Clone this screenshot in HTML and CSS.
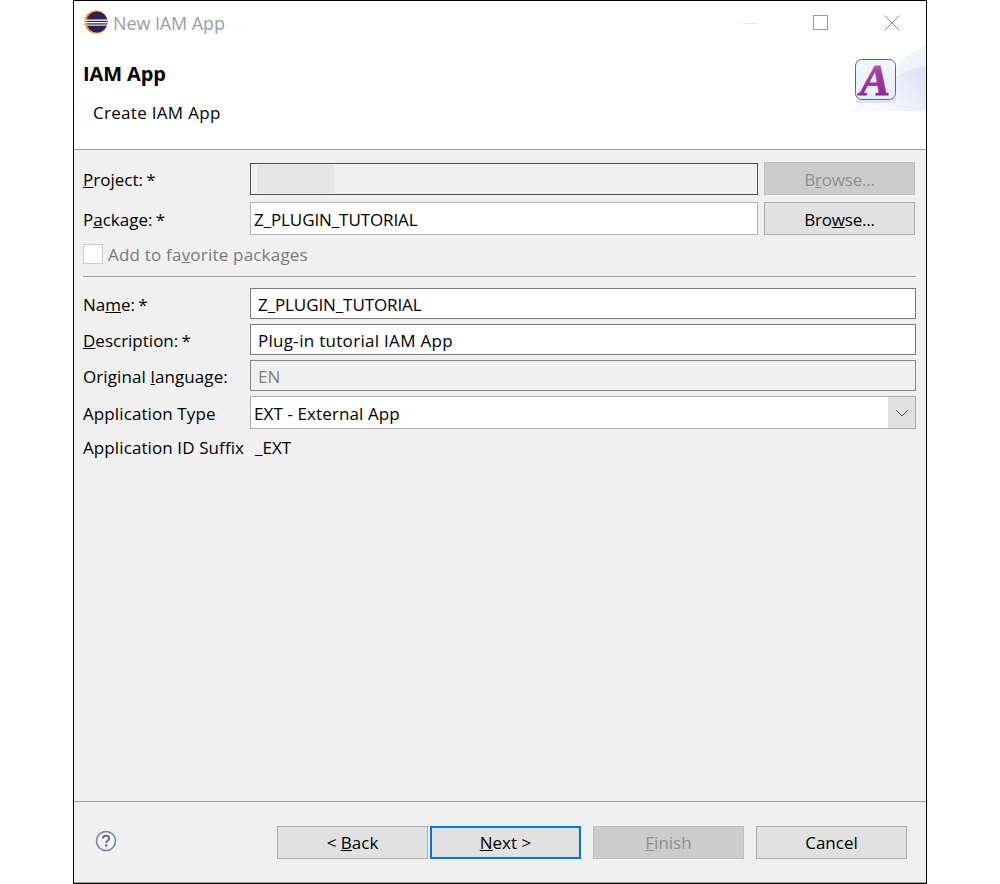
FILE: index.html
```html
<!DOCTYPE html>
<html lang="en">
<head>
<meta charset="utf-8">
<title>New IAM App</title>
<link rel="stylesheet" href="styles.css">
</head>
<body>
<div class="window">
  <div class="titlebar">
    <svg class="app-icon" width="24" height="24" viewBox="0 0 24 24">
      <circle cx="12" cy="12" r="11.5" fill="#f7941e"/>
      <circle cx="13" cy="12" r="10.5" fill="#2c2255"/>
      <rect x="1.5" y="9.5" width="22" height="1.3" fill="#fff"/>
      <rect x="1.5" y="12" width="22" height="1.3" fill="#fff"/>
      <rect x="2" y="14.5" width="21" height="1.2" fill="#e8e8f2"/>
    </svg>
    <span class="win-title">New IAM App</span>
    <div class="win-controls">
      <svg class="ctl-min" width="16" height="16" viewBox="0 0 16 16"><path d="M0 7.5H15" stroke="#e6e6e6"/></svg>
      <svg class="ctl-max" width="16" height="16" viewBox="0 0 16 16"><rect x="0.5" y="0.5" width="14" height="14" fill="none" stroke="#999"/></svg>
      <svg class="ctl-close" width="16" height="16" viewBox="0 0 16 16"><path d="M0.5 0.5L15.5 15.5M15.5 0.5L0.5 15.5" stroke="#8a8a8a"/></svg>
    </div>
  </div>
  <div class="banner">
    <div class="banner-text">
      <div class="banner-head">IAM App</div>
      <div class="banner-sub">Create IAM App</div>
    </div>
    <svg class="banner-logo" width="75" height="66" viewBox="0 0 75 66">
      <defs>
        <linearGradient id="sw" x1="0" y1="1" x2="1" y2="0.3"><stop offset="0" stop-color="#ffffff"/><stop offset="1" stop-color="#dde5f6"/></linearGradient>
        <linearGradient id="sw2" x1="0" y1="0" x2="1" y2="0"><stop offset="0" stop-color="#f6f8fd"/><stop offset="1" stop-color="#eef2fb"/></linearGradient>
        <linearGradient id="box" x1="0" y1="0" x2="0" y2="1"><stop offset="0" stop-color="#f2f6fd"/><stop offset="1" stop-color="#e6edf9"/></linearGradient>
        <linearGradient id="glyph" x1="0" y1="0" x2="0" y2="1"><stop offset="0" stop-color="#c98bc4"/><stop offset="0.35" stop-color="#a03fa0"/><stop offset="1" stop-color="#8a1f90"/></linearGradient>
      </defs>
      <path d="M0 66C22 52 48 10 75 0V66Z" fill="url(#sw2)"/>
      <path d="M8 66C28 42 50 24 75 21V66Z" fill="url(#sw)"/>
      <rect x="5" y="55" width="40" height="3" fill="#e4e4e4"/>
      <rect x="4.5" y="14.5" width="40" height="40" rx="6" fill="url(#box)" stroke="#3f6f9c"/>
      <text class="logo-letter" x="24" y="50" text-anchor="middle" fill="url(#glyph)" stroke="url(#glyph)">A</text>
    </svg>
  </div>
  <div class="content">
    <div class="row row-project">
      <label class="lbl lbl-req"><u>P</u>roject: *</label>
      <div class="input input-dark"><div class="blur"></div></div>
      <button class="btn btn-side btn-off">B<u>r</u>owse...</button>
    </div>
    <div class="row row-package">
      <label class="lbl lbl-req">P<u>a</u>ckage: *</label>
      <div class="input input-tight input-caps">Z_PLUGIN_TUTORIAL</div>
      <button class="btn btn-side">Bro<u>w</u>se...</button>
    </div>
    <div class="check-row">
      <span class="check"></span>
      <span class="check-label">Add to fa<u>v</u>orite packages</span>
    </div>
    <div class="rule"></div>
    <div class="row row-name">
      <label class="lbl lbl-req">Na<u>m</u>e: *</label>
      <div class="input input-field input-wide input-caps">Z_PLUGIN_TUTORIAL</div>
    </div>
    <div class="row row-name">
      <label class="lbl lbl-req"><u>D</u>escription: *</label>
      <div class="input input-field input-wide input-spaced">Plug-in tutorial IAM App</div>
    </div>
    <div class="row row-name">
      <label class="lbl">Original <u>l</u>anguage:</label>
      <div class="input input-field input-wide input-off">EN</div>
    </div>
    <div class="row row-combo">
      <label class="lbl">Application Type</label>
      <div class="combo">
        <span class="combo-value">EXT - External App</span>
        <span class="combo-arrow"><svg width="14" height="8" viewBox="0 0 14 8"><path d="M1 1L7 7L13 1" fill="none" stroke="#555" stroke-width="1"/></svg></span>
      </div>
    </div>
    <div class="row row-suffix">
      <label class="lbl">Application ID Suffix</label>
      <span class="suffix">_EXT</span>
    </div>
  </div>
  <div class="footer">
    <svg class="help" width="22" height="22" viewBox="0 0 22 22">
      <circle cx="11" cy="11" r="9.5" fill="#f4f5f8" stroke="#6f7f99" stroke-width="1.5"/>
      <path d="M7.8 8.6C7.8 6.8 9.2 5.8 11 5.8C12.9 5.8 14.2 6.9 14.2 8.4C14.2 10.4 11.2 10.6 11.2 13" fill="none" stroke="#5f6f8c" stroke-width="2"/>
      <rect x="10" y="14.4" width="2.3" height="2.3" fill="#5f6f8c"/>
    </svg>
    <div class="footer-buttons">
      <button class="btn btn-foot">&lt; <u>B</u>ack</button>
      <button class="btn btn-foot btn-default"><u>N</u>ext &gt;</button>
      <button class="btn btn-foot btn-off btn-finish"><u>F</u>inish</button>
      <button class="btn btn-foot btn-cancel">Cancel</button>
    </div>
  </div>
</div>
</body>
</html>
```

FILE: styles.css
```css
* { box-sizing: border-box; }
html, body { margin: 0; padding: 0; background: #fff; }
body {
  font-family: "Open Sans", "Noto Sans", "Liberation Sans", sans-serif;
  font-size: 17px;
  color: #000;
  height: 884px;
  overflow: hidden;
}
.window {
  margin-left: 73px;
  width: 854px;
  height: 884px;
  border: 1px solid #000;
  display: flex;
  flex-direction: column;
  background: #f0f0f0;
}
.titlebar {
  height: 44px;
  background: #fff;
  display: flex;
  align-items: flex-start;
  flex: none;
}
.app-icon { margin: 9px 0 0 10px; }
.win-title { margin: 11px 0 0 5px; color: #9a9ea6; font-size: 18px; line-height: 23px; letter-spacing: -0.1px; }
.win-controls { margin-left: auto; display: flex; }
.ctl-min { margin: 15px 0 0 0; }
.ctl-max { margin: 14px 0 0 54px; }
.ctl-close { margin: 14px 26px 0 55px; }
.banner {
  height: 105px;
  flex: none;
  background: #fff;
  border-bottom: 1px solid #a0a0a0;
  display: flex;
  justify-content: space-between;
  align-items: flex-start;
}
.banner-text { padding: 17px 0 0 9px; }
.banner-head { font-weight: 700; font-size: 20px; line-height: 24px; letter-spacing: -0.1px; }
.banner-sub { margin: 15px 0 0 10px; line-height: 24px; letter-spacing: 0.3px; }
.banner-logo { display: block; }
.logo-letter {
  font-family: "Liberation Serif", serif;
  font-style: italic;
  font-weight: 700;
  font-size: 45px;
  stroke-width: 0.8px;
}
.content {
  flex: 1;
  padding: 12px 10px 0 9px;
  display: flex;
  flex-direction: column;
  border-bottom: 1px solid #a0a0a0;
}
.row { display: flex; align-items: center; }
.lbl { width: 167px; flex: none; line-height: 24px; padding-top: 2px; letter-spacing: 0.1px; }
.lbl-req { word-spacing: -1.2px; letter-spacing: 0; }
.row-project { height: 33px; }
.row-package { height: 33px; margin-top: 7px; }
.row-name { height: 31px; margin-top: 5px; }
.rule + .row-name { margin-top: 11px; }
.row-combo { height: 33px; margin-top: 5px; }
.row-suffix { height: 24px; margin-top: 6px; }
.input {
  height: 33px;
  flex: 1;
  background: #fff;
  border: 1px solid #b4b4b4;
  padding: 0 3px;
  line-height: 33px;
  white-space: nowrap;
}
.input-caps { letter-spacing: -0.1px; }
.input-spaced { letter-spacing: 0.3px; }
.input-dark {
  height: 32px;
  border-color: #4d4d4d;
  background: #f0f0f0;
  padding: 1px 6px;
}
.blur { width: 77px; height: 28px; background: #e6e6e6; }
.input-field { padding: 0 7px; height: 31px; line-height: 31px; border-color: #7a7a7a; }
.input-off { background: #f0f0f0; color: #7e7e7e; border-color: #858585; }
.btn {
  font: inherit;
  color: #000;
  background: #e1e1e1;
  border: 1px solid #adadad;
  height: 33px;
  padding: 0;
  line-height: 30px;
}
.btn-side { width: 151px; margin: 0 1px 0 6px; flex: none; padding-top: 2px; letter-spacing: -0.2px; }
.btn-off { background: #cccccc; border-color: #bfbfbf; color: #8f8f8f; }
.check-row { display: flex; align-items: center; height: 21px; margin-top: 8px; }
.check {
  width: 20px;
  height: 20px;
  background: #fff;
  border: 1px solid #cccccc;
}
.check-label { margin-left: 5px; color: #7b7b7b; line-height: 24px; padding-top: 2px; letter-spacing: 0.2px; }
.rule { height: 1px; background: #a0a0a0; margin-top: 12px; }
.combo {
  flex: 1;
  height: 33px;
  display: flex;
  background: #fff;
  border: 1px solid #ababab;
}
.combo-value { flex: 1; padding-left: 3px; line-height: 33px; letter-spacing: 0.1px; }
.combo-arrow {
  width: 27px;
  background: #e1e1e1;
  display: flex;
  align-items: center;
  justify-content: center;
}
.suffix { margin-left: 5px; line-height: 24px; padding-top: 2px; }
.footer {
  height: 81px;
  flex: none;
  display: flex;
  align-items: flex-start;
  padding: 24px 19px 0 21px;
  border-bottom: 1px solid #a0a0a0;
}
.help { margin-top: 4px; flex: none; }
.footer-buttons { margin-left: auto; display: flex; }
.btn-foot { width: 151px; }
.btn-default { margin-left: 2px; border: 2px solid #0078d7; line-height: 29px; }
.btn-finish { margin-left: 12px; }
.btn-cancel { margin-left: 12px; }
```
